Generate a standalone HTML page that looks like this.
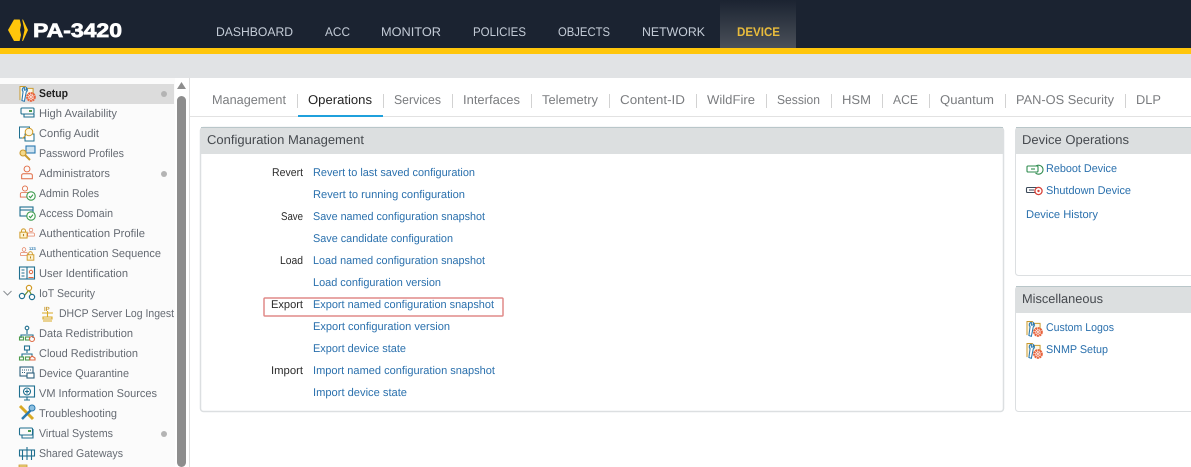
<!DOCTYPE html>
<html><head><meta charset="utf-8"><title>PA-3420</title>
<style>
html,body{margin:0;padding:0;background:#fff;width:1191px;height:467px;overflow:hidden}
svg{display:block}
text{font-family:"Liberation Sans",sans-serif;text-rendering:geometricPrecision}
.n{font-size:12.5px;fill:#c3cbd6}
.s{font-size:11.3px;fill:#666b73}
.t{font-size:12.8px;fill:#7a7c7f}
.l{font-size:11.2px;fill:#2a70ad}
.b{font-size:11.2px;fill:#2b2b2b}
.h{font-size:12.8px;fill:#45494e}
</style></head><body>
<svg width="1191" height="467" viewBox="0 0 1191 467" xmlns="http://www.w3.org/2000/svg">
<defs>
<linearGradient id="dv" x1="0" y1="0" x2="0" y2="1"><stop offset="0" stop-color="#1b2331"/><stop offset="1" stop-color="#4a5059"/></linearGradient>
<symbol id="setup" viewBox="0 0 18 18" overflow="visible">
<path d="M1 15.500V1.500h5.500l1.500 2h6.500v6" fill="#fdf6e3" stroke="#c99a2e" stroke-width="1"/>
<path d="M5.500 2.500c-2.200.3-2.800 3-1.300 4.300L3 16l2.500.8L7.500 7c1.600-.9 1.500-3.300 0-4.300v2.300l-2 .3z" fill="#fff" stroke="#2a79b0" stroke-width="1.100"/>
<circle cx="12.300" cy="12.300" r="3.800" fill="#fff" stroke="#e8623c" stroke-width="2.400" stroke-dasharray="2 .5"/>
<circle cx="12.300" cy="12.300" r="1.400" fill="#fff" stroke="#e8623c" stroke-width=".8"/>
</symbol>
<symbol id="person" viewBox="0 0 18 18" overflow="visible">
<circle cx="9" cy="4.500" r="3.300" fill="none" stroke="#e06a43" stroke-width="1.100"/>
<path d="M3 15.500v-4c0-1 1-1.700 2-1.700h8c1 0 2 .7 2 1.700v4z" fill="none" stroke="#e06a43" stroke-width="1.100"/>
</symbol>
<symbol id="chk" viewBox="0 0 10 10" overflow="visible">
<circle cx="5" cy="5" r="4.200" fill="#fff" stroke="#3a9a4a" stroke-width="1.100"/>
<path d="M3 5.200l1.500 1.500L7 3.600" fill="none" stroke="#3a9a4a" stroke-width="1.100"/>
</symbol>
<symbol id="lock" viewBox="0 0 10 12" overflow="visible">
<rect x="1" y="4.500" width="8" height="6.500" fill="#fdf3d4" stroke="#d09a25" stroke-width="1.100"/>
<path d="M2.800 4.500V3a2.200 2.200 0 0 1 4.400 0v1.500" fill="none" stroke="#d09a25" stroke-width="1.100"/>
<rect x="4.400" y="6.500" width="1.200" height="2.500" fill="#b5841c"/>
</symbol>
</defs>

<!-- top bars -->
<rect x="0" y="0" width="1191" height="48" fill="#1b2331"/>
<rect x="720" y="0" width="76" height="48" fill="url(#dv)"/>
<rect x="0" y="48" width="1191" height="6" fill="#ffc60b"/>
<rect x="0" y="54" width="1191" height="24" fill="#e1e3e5"/>

<!-- logo -->
<path d="M14 19.500H23L28 30 23 41H14L8 30z" fill="#ffc60b"/>
<path d="M19.500 18.500H22L24.500 30 22 41.500H19.500L21 35 20 30 21 25z" fill="#1b2331"/>
<text x="33" y="37" font-size="19.500" font-weight="700" fill="#fff" stroke="#fff" stroke-width=".7" textLength="89" lengthAdjust="spacingAndGlyphs">PA-3420</text>

<!-- nav -->
<text class="n" x="216" y="36" textLength="77" lengthAdjust="spacingAndGlyphs">DASHBOARD</text>
<text class="n" x="325" y="36" textLength="25" lengthAdjust="spacingAndGlyphs">ACC</text>
<text class="n" x="381" y="36" textLength="60" lengthAdjust="spacingAndGlyphs">MONITOR</text>
<text class="n" x="473" y="36" textLength="53" lengthAdjust="spacingAndGlyphs">POLICIES</text>
<text class="n" x="558" y="36" textLength="52" lengthAdjust="spacingAndGlyphs">OBJECTS</text>
<text class="n" x="642" y="36" textLength="63" lengthAdjust="spacingAndGlyphs">NETWORK</text>
<text class="n" x="737" y="36" textLength="43" lengthAdjust="spacingAndGlyphs" style="fill:#e8bb3c;font-weight:700">DEVICE</text>

<!-- sidebar -->
<rect x="0" y="78" width="189" height="389" fill="#fbfbfb"/>
<rect x="0" y="84" width="174" height="20" fill="#dcdcdc"/>
<rect x="175" y="78" width="14" height="389" fill="#fff"/>
<rect x="177" y="96" width="9" height="371" rx="4.500" fill="#8d8d8d"/>
<path d="M181.500 82l4.500 7h-9z" fill="#8d8d8d"/>
<rect x="189" y="78" width="1" height="389" fill="#dedede"/>

<g class="sb">
<text x="39" y="97" font-size="11.300" font-weight="700" fill="#222" textLength="29" lengthAdjust="spacingAndGlyphs">Setup</text>
<text class="s" x="39" y="117" textLength="78" lengthAdjust="spacingAndGlyphs">High Availability</text>
<text class="s" x="39" y="137" textLength="60" lengthAdjust="spacingAndGlyphs">Config Audit</text>
<text class="s" x="39" y="157" textLength="85" lengthAdjust="spacingAndGlyphs">Password Profiles</text>
<text class="s" x="39" y="177" textLength="71" lengthAdjust="spacingAndGlyphs">Administrators</text>
<text class="s" x="39" y="197" textLength="60" lengthAdjust="spacingAndGlyphs">Admin Roles</text>
<text class="s" x="39" y="217" textLength="74" lengthAdjust="spacingAndGlyphs">Access Domain</text>
<text class="s" x="39" y="237" textLength="106" lengthAdjust="spacingAndGlyphs">Authentication Profile</text>
<text class="s" x="39" y="257" textLength="122" lengthAdjust="spacingAndGlyphs">Authentication Sequence</text>
<text class="s" x="39" y="277" textLength="89" lengthAdjust="spacingAndGlyphs">User Identification</text>
<text class="s" x="39" y="297" textLength="56" lengthAdjust="spacingAndGlyphs">IoT Security</text>
<text class="s" x="59" y="317" textLength="115" lengthAdjust="spacingAndGlyphs">DHCP Server Log Ingest</text>
<text class="s" x="39" y="337" textLength="94" lengthAdjust="spacingAndGlyphs">Data Redistribution</text>
<text class="s" x="39" y="357" textLength="99" lengthAdjust="spacingAndGlyphs">Cloud Redistribution</text>
<text class="s" x="39" y="377" textLength="90" lengthAdjust="spacingAndGlyphs">Device Quarantine</text>
<text class="s" x="39" y="397" textLength="118" lengthAdjust="spacingAndGlyphs">VM Information Sources</text>
<text class="s" x="39" y="417" textLength="78" lengthAdjust="spacingAndGlyphs">Troubleshooting</text>
<text class="s" x="39" y="437" textLength="74" lengthAdjust="spacingAndGlyphs">Virtual Systems</text>
<text class="s" x="39" y="457" textLength="84" lengthAdjust="spacingAndGlyphs">Shared Gateways</text>
</g>
<circle cx="164" cy="94" r="3" fill="#b4b4b4"/>
<circle cx="164" cy="174" r="3" fill="#b4b4b4"/>
<circle cx="164" cy="434" r="3" fill="#b4b4b4"/>
<path d="M3.500 291l4 4 4-4" fill="none" stroke="#8a8f94" stroke-width="1"/>

<!-- sidebar icons -->
<use href="#setup" x="19" y="85" width="17.500" height="17.500"/>
<g fill="none" stroke="#1f6f8f" stroke-width="1.100">
<rect x="21" y="108" width="13" height="6" rx="1"/><path d="M24 114v3h10v-3" /></g>
<rect x="29" y="110" width="3" height="2" fill="#4b9a4b"/>
<g fill="none" stroke-width="1">
<path d="M19.500 127h10v11h-10z" stroke="#1f6f8f" fill="#fff"/><path d="M25 134h9v7h-9z" stroke="#1f6f8f" fill="#fff"/>
<circle cx="29" cy="132" r="3.800" stroke="#d09a25" fill="#fdf6e0"/><path d="M26 135l-3.500 3.500" stroke="#d09a25"/></g>
<g fill="none" stroke-width="1.100">
<rect x="26" y="146" width="9" height="7" fill="#cfe3f0" stroke="#2a79b0"/>
<circle cx="23" cy="153" r="3" stroke="#c99a2e" fill="#f4d98a"/><path d="M25 155l5 5" stroke="#c99a2e" stroke-width="2"/></g>
<use href="#person" x="19" y="165" width="16" height="16"/>
<use href="#person" x="18" y="185" width="14" height="14"/><use href="#chk" x="26" y="191" width="10" height="10"/>
<g fill="none" stroke="#1f6f8f" stroke-width="1.100"><rect x="20" y="207" width="13" height="9"/><path d="M20 210h13"/></g><use href="#chk" x="26" y="211" width="10" height="10"/>
<use href="#lock" x="19" y="228" width="9" height="11"/><use href="#person" x="26" y="226" width="10" height="13"/>
<use href="#person" x="19" y="246" width="10" height="12"/><use href="#lock" x="26" y="251" width="9" height="10"/>
<text x="29" y="250" font-size="4" font-weight="700" fill="#2a79b0">123</text>
<g fill="none" stroke="#1f6f8f" stroke-width="1.100"><rect x="19.500" y="267" width="15" height="12"/><path d="M27 267v12M21.500 270h3M21.500 273h3M21.500 276h3"/></g>
<circle cx="31" cy="272" r="1.700" fill="none" stroke="#e06a43"/><path d="M28.500 277.500h5" stroke="#e06a43"/>
<g stroke-width="1.200" fill="none"><path d="M24 296l5-6 3 6" stroke="#6b8f2a"/><circle cx="29" cy="288" r="2.600" stroke="#d09a25" fill="#fff"/><circle cx="22" cy="296" r="2.600" stroke="#1f6f8f" fill="#fff"/><circle cx="32" cy="297" r="2.600" stroke="#1f6f8f" fill="#fff"/></g>
<text x="44" y="311" font-size="6" font-weight="700" fill="#c99a2e">IP</text>
<path d="M42 313h11M47.500 311v6M43 317h9v2h-9zM43 321h9" fill="none" stroke="#d8a925" stroke-width="1.100"/>
<g fill="none" stroke-width="1.100"><circle cx="27" cy="328" r="1.800" stroke="#1f6f8f"/><path d="M27 330v4M21 338v-3h12v3" stroke="#1f6f8f"/><rect x="19.500" y="337" width="4" height="3" stroke="#4b9a4b"/><rect x="25.500" y="337" width="4" height="3" stroke="#4b9a4b"/><circle cx="32" cy="339" r="2.500" stroke="#e06a43"/></g>
<g fill="none" stroke-width="1.100"><rect x="24.500" y="346" width="5" height="4" stroke="#1f6f8f"/><path d="M27 350v3M22 357v-3h10v3" stroke="#1f6f8f"/><rect x="19.500" y="357" width="4" height="3" stroke="#4b9a4b"/><rect x="25.500" y="357" width="4" height="3" stroke="#4b9a4b"/><path d="M30 360l0-2 2-2 3 2v2z" stroke="#e06a43"/></g>
<g fill="none" stroke="#2c5f7c" stroke-width="1.100"><rect x="20" y="367" width="13" height="9"/><rect x="27" y="373" width="7" height="5" fill="#fff"/><path d="M22 370h9M22 372.500h4" stroke-dasharray="1 1"/></g>
<g fill="none" stroke="#1f6f8f" stroke-width="1.100"><rect x="19.500" y="386" width="15" height="11"/><circle cx="27" cy="391.500" r="3.500"/><path d="M25 391.500h4M27 389.500v4M24 400h6M27 397v3"/></g>
<path d="M20 406l13 13" stroke="#d8a925" stroke-width="3"/><path d="M22 419l11-11" stroke="#2a79b0" stroke-width="2.500"/><circle cx="32" cy="408" r="3" fill="#8dc0e0" stroke="#2a79b0"/>
<g fill="none" stroke="#1f6f8f" stroke-width="1.100"><rect x="19.500" y="428" width="13" height="7" rx="1"/><path d="M22 435v3h11v-9"/></g><rect x="28" y="430" width="3" height="2" fill="#4b9a4b"/>
<g fill="none" stroke="#1f6f8f" stroke-width="1.100"><rect x="19.500" y="450" width="15" height="6"/><path d="M27 447v3M22.500 456v4M27 456v4M31.500 456v4M22.500 450v6M27 450v6M31.500 450v6"/></g>
<rect x="19" y="465" width="8" height="2" fill="#f0d98a" stroke="#c99a2e" stroke-width=".8"/>

<!-- tabs -->
<text class="t" x="212" y="104" textLength="74" lengthAdjust="spacingAndGlyphs">Management</text>
<text class="t" x="308" y="104" textLength="64" lengthAdjust="spacingAndGlyphs" style="fill:#222">Operations</text>
<text class="t" x="394" y="104" textLength="47" lengthAdjust="spacingAndGlyphs">Services</text>
<text class="t" x="463" y="104" textLength="57" lengthAdjust="spacingAndGlyphs">Interfaces</text>
<text class="t" x="542" y="104" textLength="56" lengthAdjust="spacingAndGlyphs">Telemetry</text>
<text class="t" x="620" y="104" textLength="65" lengthAdjust="spacingAndGlyphs">Content-ID</text>
<text class="t" x="707" y="104" textLength="48" lengthAdjust="spacingAndGlyphs">WildFire</text>
<text class="t" x="777" y="104" textLength="43" lengthAdjust="spacingAndGlyphs">Session</text>
<text class="t" x="842" y="104" textLength="29" lengthAdjust="spacingAndGlyphs">HSM</text>
<text class="t" x="893" y="104" textLength="25" lengthAdjust="spacingAndGlyphs">ACE</text>
<text class="t" x="940" y="104" textLength="54" lengthAdjust="spacingAndGlyphs">Quantum</text>
<text class="t" x="1016" y="104" textLength="98" lengthAdjust="spacingAndGlyphs">PAN-OS Security</text>
<text class="t" x="1136" y="104" textLength="25" lengthAdjust="spacingAndGlyphs">DLP</text>
<path d="M297.500 94v14M383.500 94v14M452.500 94v14M531.500 94v14M609.500 94v14M696.500 94v14M766.500 94v14M831.500 94v14M882.500 94v14M929.500 94v14M1005.500 94v14M1125.500 94v14" stroke="#d2d2d2"/>
<rect x="190" y="116" width="1001" height="1" fill="#e2e2e2"/>
<rect x="298" y="115" width="85" height="2" fill="#1fa0dc"/>

<!-- panels -->
<rect x="200.500" y="127.500" width="803" height="284" rx="3" fill="#fff" stroke="#dcdfe1" stroke-width="1.500"/>
<rect x="201" y="128" width="802" height="26" fill="#dcdfe0"/>
<rect x="201" y="127" width="802" height="1" fill="#b9c6c9"/>
<rect x="1015.500" y="127.500" width="180" height="148" rx="3" fill="#fff" stroke="#dcdfe1"/>
<rect x="1016" y="128" width="175" height="26" fill="#dcdfe0"/>
<rect x="1016" y="127" width="175" height="1" fill="#b9c6c9"/>
<rect x="1015.500" y="286.500" width="180" height="125" rx="3" fill="#fff" stroke="#dcdfe1"/>
<rect x="1016" y="287" width="175" height="26" fill="#dcdfe0"/>
<rect x="1016" y="286" width="175" height="1" fill="#b9c6c9"/>

<text class="h" x="207" y="144" textLength="157" lengthAdjust="spacingAndGlyphs">Configuration Management</text>
<text class="h" x="1022" y="144" textLength="107" lengthAdjust="spacingAndGlyphs">Device Operations</text>
<text class="h" x="1022" y="303" textLength="81" lengthAdjust="spacingAndGlyphs">Miscellaneous</text>

<!-- config rows -->
<text class="b" x="272" y="176" textLength="31" lengthAdjust="spacingAndGlyphs">Revert</text>
<text class="b" x="281" y="220" textLength="22" lengthAdjust="spacingAndGlyphs">Save</text>
<text class="b" x="280" y="264" textLength="23" lengthAdjust="spacingAndGlyphs">Load</text>
<text class="b" x="271" y="308" textLength="32" lengthAdjust="spacingAndGlyphs">Export</text>
<text class="b" x="271" y="374" textLength="32" lengthAdjust="spacingAndGlyphs">Import</text>
<text class="l" x="313" y="176" textLength="162" lengthAdjust="spacingAndGlyphs">Revert to last saved configuration</text>
<text class="l" x="313" y="198" textLength="152" lengthAdjust="spacingAndGlyphs">Revert to running configuration</text>
<text class="l" x="313" y="220" textLength="172" lengthAdjust="spacingAndGlyphs">Save named configuration snapshot</text>
<text class="l" x="313" y="242" textLength="140" lengthAdjust="spacingAndGlyphs">Save candidate configuration</text>
<text class="l" x="313" y="264" textLength="172" lengthAdjust="spacingAndGlyphs">Load named configuration snapshot</text>
<text class="l" x="313" y="286" textLength="128" lengthAdjust="spacingAndGlyphs">Load configuration version</text>
<text class="l" x="313" y="308" textLength="181" lengthAdjust="spacingAndGlyphs">Export named configuration snapshot</text>
<text class="l" x="313" y="330" textLength="137" lengthAdjust="spacingAndGlyphs">Export configuration version</text>
<text class="l" x="313" y="352" textLength="93" lengthAdjust="spacingAndGlyphs">Export device state</text>
<text class="l" x="313" y="374" textLength="182" lengthAdjust="spacingAndGlyphs">Import named configuration snapshot</text>
<text class="l" x="313" y="396" textLength="94" lengthAdjust="spacingAndGlyphs">Import device state</text>
<rect x="264" y="298" width="239" height="18" rx="1" fill="none" stroke="#e08a88" stroke-width="1.500"/>

<!-- right panels -->
<text class="l" x="1046" y="172" textLength="71" lengthAdjust="spacingAndGlyphs">Reboot Device</text>
<text class="l" x="1046" y="194" textLength="85" lengthAdjust="spacingAndGlyphs">Shutdown Device</text>
<text class="l" x="1026" y="218" textLength="72" lengthAdjust="spacingAndGlyphs">Device History</text>
<text class="l" x="1046" y="331" textLength="68" lengthAdjust="spacingAndGlyphs">Custom Logos</text>
<text class="l" x="1046" y="353" textLength="62" lengthAdjust="spacingAndGlyphs">SNMP Setup</text>

<g fill="none" stroke="#2e8b4e" stroke-width="1.100"><rect x="1027" y="166" width="11" height="6" rx="1"/><path d="M1031 169h4"/><path d="M1036 166a4.500 4.500 0 1 1-.5 7"/></g>
<g fill="none"><rect x="1026.500" y="187.500" width="10.500" height="5" rx="1" stroke="#3c4a5a" stroke-width="1.100"/><path d="M1029 190h5" stroke="#3c4a5a"/><circle cx="1038.500" cy="191" r="3.600" stroke="#d8433a" stroke-width="1.300" fill="#fff"/><circle cx="1038.500" cy="191" r="1.200" fill="#d8433a"/></g>
<use href="#setup" x="1026" y="320" width="17.500" height="17.500"/>
<use href="#setup" x="1026" y="342" width="17.500" height="17.500"/>
</svg>
</body></html>
